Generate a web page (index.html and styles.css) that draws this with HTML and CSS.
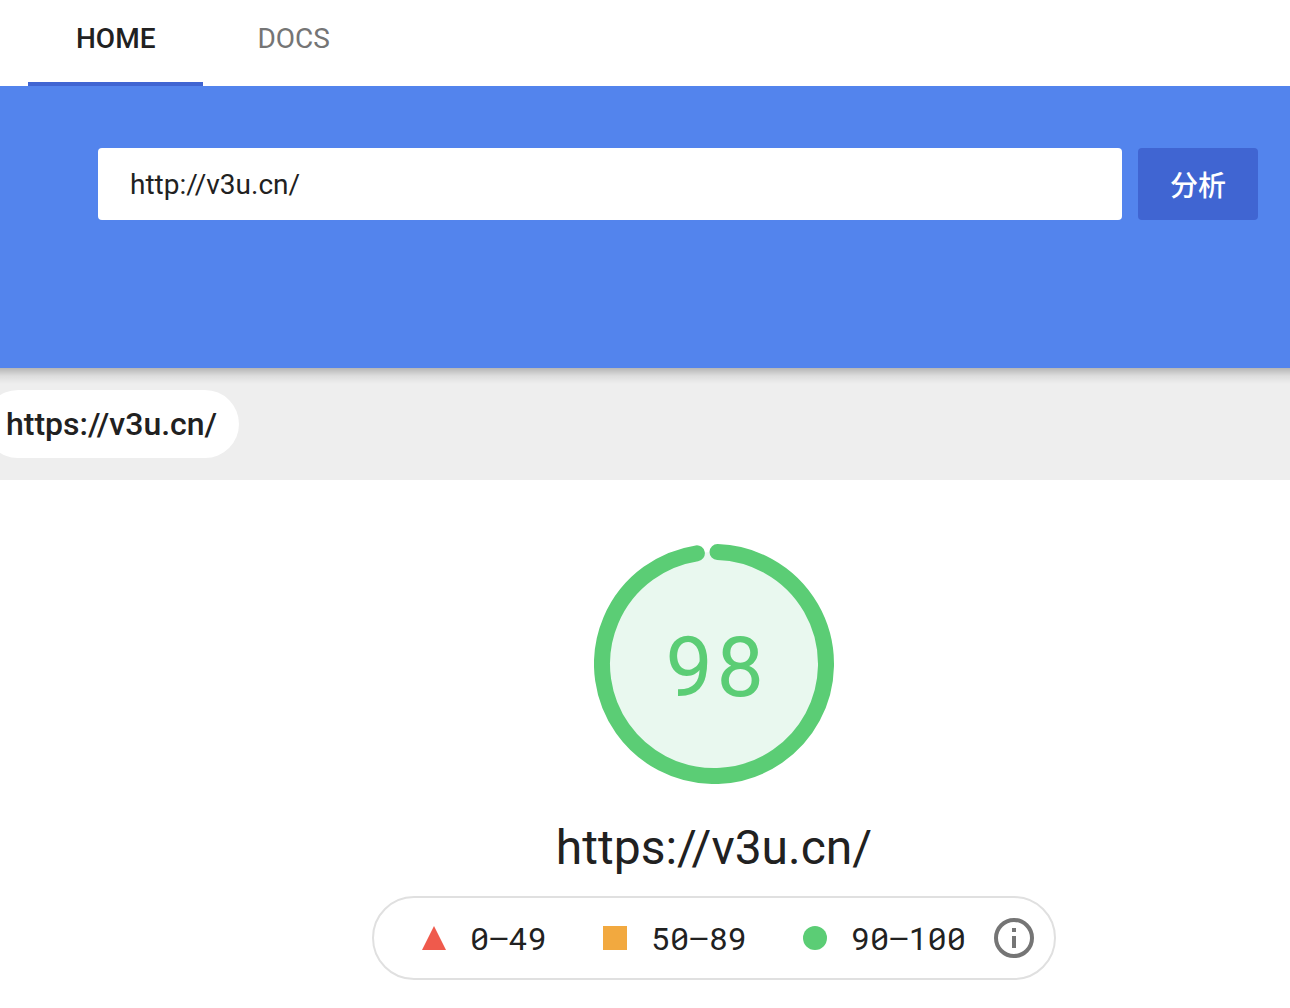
FILE: index.html
```html
<!DOCTYPE html>
<html lang="zh-CN">
<head>
    <meta charset="UTF-8" />
    <meta name="viewport" content="width=device-width, initial-scale=1.0" />
    <title>PageSpeed Insights</title>
    <link rel="stylesheet" href="styles.css">
</head>

<body>
    <header>
        <nav class="tabs">
            <a href="#" class="tab active">HOME</a>
            <a href="#" class="tab">DOCS</a>
        </nav>
    </header>

    <form class="search-band">
        <input type="text" class="url-input" aria-label="URL" value="http://v3u.cn/" />
        <button type="submit" class="analyze-button">分析</button>
    </form>

    <div class="url-bar">
        <a href="#" class="url-chip">https://v3u.cn/</a>
    </div>

    <main class="report">
        <div class="gauge">
            <svg class="gauge-arc" viewBox="0 0 240 240" aria-hidden="true">
                <circle cx="120" cy="120" r="112" fill="#e9f8ef" />
                <path d="M123.500 8.055A112 112 0 1 1 102.869 9.318" fill="none" stroke="#5bcd75" stroke-width="16" stroke-linecap="round" />
            </svg>
            <span class="gauge-score">98</span>
        </div>

        <h1 class="report-url">https://v3u.cn/</h1>

        <div class="legend">
            <span class="range"><i class="mark triangle"></i>0–49</span>
            <span class="range"><i class="mark square"></i>50–89</span>
            <span class="range"><i class="mark circle"></i>90–100</span>
            <button type="button" class="info-button" aria-label="info">
                <svg viewBox="0 0 40 40" aria-hidden="true">
                    <circle cx="20" cy="20" r="18" fill="none" stroke="#757575" stroke-width="4" />
                    <path d="M18 10h4v4h-4zM18 18h4v12h-4z" fill="#757575" />
                </svg>
            </button>
        </div>
    </main>
</body>
</html>
```
FILE: styles.css
```css
* {
    box-sizing: border-box;
}

body {
    margin: 0;
    font-family: Roboto, "Noto Sans CJK SC", sans-serif;
    color: #212121;
    background-color: #fff;
}

a {
    color: inherit;
    text-decoration: none;
}

/* top tabs */
.tabs {
    display: flex;
    gap: 6px;
    height: 86px;
    padding-left: 28px;
}

.tab {
    padding: 23px 48px 0;
    font-size: 28px;
    line-height: 32px;
    color: #757575;
}

.tab.active {
    font-weight: 500;
    color: #212121;
    border-bottom: 4px solid #4065d2;
}

/* search */
.search-band {
    display: flex;
    align-items: flex-start;
    gap: 16px;
    height: 282px;
    padding: 62px 32px 0 98px;
    background-color: #5384ed;
}

.url-input {
    flex: 1;
    min-width: 0;
    height: 72px;
    padding: 0 32px;
    border: none;
    border-radius: 4px;
    background-color: #fff;
    font-family: inherit;
    font-size: 28px;
    color: #212121;
}

.analyze-button {
    height: 72px;
    padding: 0 32px;
    border: none;
    border-radius: 4px;
    background-color: #4065d2;
    font-family: inherit;
    font-size: 28px;
    font-weight: 500;
    color: #fff;
    cursor: pointer;
}

/* tested url */
.url-bar {
    display: flex;
    align-items: center;
    height: 112px;
    background: linear-gradient(rgba(0, 0, 0, 0.24), rgba(0, 0, 0, 0.07) 8px, transparent 16px) #eee;
}

.url-chip {
    margin-left: -16px;
    padding: 0 22px;
    border-radius: 34px;
    background-color: #fff;
    font-size: 32px;
    font-weight: 500;
    line-height: 68px;
}

/* report */
.report {
    display: flex;
    flex-direction: column;
    align-items: center;
    padding: 64px 0 28px 138px;
}

.gauge {
    display: grid;
    place-items: center;
    width: 240px;
    height: 240px;
}

.gauge-arc,
.gauge-score {
    grid-area: 1 / 1;
}

.gauge-arc {
    width: 100%;
}

.gauge-score {
    font-family: "Roboto Mono", "Liberation Mono", monospace;
    font-size: 84px;
    line-height: 96px;
    color: #5bcd75;
}

.report-url {
    margin: 32px 0 16px;
    font-size: 48px;
    font-weight: 400;
    line-height: 64px;
}

.legend {
    display: flex;
    align-items: center;
    height: 84px;
    padding: 0 20px 0 48px;
    border: 2px solid #e0e0e0;
    border-radius: 42px;
}

.range {
    display: flex;
    align-items: center;
    gap: 24px;
    margin-right: 56px;
    font-family: "Roboto Mono", "Liberation Mono", monospace;
    font-size: 32px;
    line-height: 40px;
}

.range:nth-child(3) {
    margin-right: 28px;
}

.mark {
    width: 24px;
    height: 24px;
}

.triangle {
    background-color: #ef5a4c;
    clip-path: polygon(50% 0, 100% 100%, 0 100%);
}

.square {
    background-color: #f2a93f;
}

.circle {
    border-radius: 50%;
    background-color: #5bcd75;
}

.info-button {
    width: 40px;
    height: 40px;
    padding: 0;
    border: none;
    background: none;
    cursor: pointer;
}

.info-button svg {
    display: block;
}
```
